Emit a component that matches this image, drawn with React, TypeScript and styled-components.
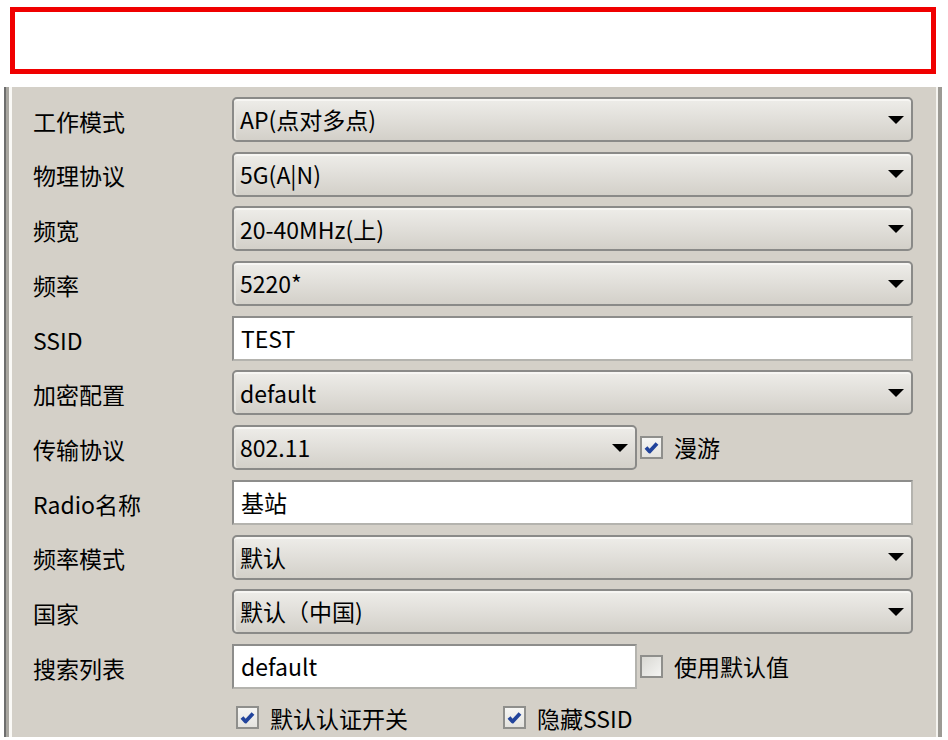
import { createGlobalStyle, styled } from 'styled-components';

const GlobalStyle = createGlobalStyle`
    html, body {
        margin: 0;
        padding: 0;
        background: #ffffff;
    }

    body {
        font-family: 'Noto Sans CJK SC', 'Noto Sans', sans-serif;
        font-size: 23px;
        line-height: 1.15;
        color: #000000;
    }
`;

const Page = styled.div`
    width: 948px;
    height: 740px;
    overflow: hidden;
    padding-top: 7px;
    box-sizing: border-box;
`;

const TitleFrame = styled.div`
    box-sizing: border-box;
    width: 926px;
    height: 67px;
    margin-left: 10px;
    border: 5px solid #f00000;
    background: #ffffff;
`;

const Panel = styled.div`
    box-sizing: border-box;
    width: 938px;
    height: 650px;
    margin: 13px 0 0 4px;
    padding: 10px 0 0 27px;
    overflow: hidden;
    background: #d4d0c8;
    border-left: 2px solid #6e6e6e;
    border-right: 4px solid #9c9a94;
    box-shadow:
        inset 3px 0 0 #a9a7a1,
        inset 6px 0 0 #faf9f6,
        inset -2px 0 0 #f4f3ef;
`;

const Form = styled.div`
    display: grid;
    grid-template-columns: 199px 681px;
    grid-auto-rows: 45px;
    row-gap: 9.7px;
`;

const Label = styled.div`
    display: flex;
    align-items: center;
    padding-top: 3px;
    white-space: nowrap;
`;

const Field = styled.div`
    display: flex;
    align-items: center;
    min-width: 0;
`;

// last row of options sits against the panel's lower edge
const OptionRow = styled.div`
    display: flex;
    align-items: flex-start;
    padding-top: 6px;
`;

const Combo = styled.div<{ $width?: number }>`
    box-sizing: border-box;
    display: flex;
    align-items: center;
    width: ${(p) => (p.$width ? `${p.$width}px` : '100%')};
    height: 100%;
    padding: 0 7px 0 6px;
    border: 2px solid #8a8a88;
    border-radius: 5px;
    background: linear-gradient(180deg, #eeede9 0%, #e2e0db 45%, #d3d0c9 100%);
    box-shadow: inset 0 2px 0 #f7f6f3, inset 2px 0 0 #e8e6e1;
    white-space: nowrap;

    & > span {
        flex: 1;
    }
`;

const DropArrow = () => (
    <svg width="16" height="8" viewBox="0 0 16 8">
        <polygon points="0,0 16,0 8,8" fill="#000000" />
    </svg>
);

const TextInput = styled.div<{ $width?: number }>`
    box-sizing: border-box;
    display: flex;
    align-items: center;
    width: ${(p) => (p.$width ? `${p.$width}px` : '100%')};
    height: 100%;
    padding: 0 7px;
    background: #ffffff;
    border: 2px solid #8d8d8b;
    border-right-color: #b4b3ae;
    border-bottom-color: #b4b3ae;
    white-space: nowrap;
`;

const Box = styled.span<{ $checked: boolean }>`
    box-sizing: border-box;
    display: inline-flex;
    align-items: center;
    justify-content: center;
    flex: none;
    width: 23px;
    height: 23px;
    border: 2px solid #8f8f8c;
    background: ${(p) =>
        p.$checked
            ? 'linear-gradient(180deg, #f6f6f4 0%, #e4e3df 100%)'
            : 'linear-gradient(135deg, #d9d8d3 0%, #f4f4f2 100%)'};
`;

const Option = styled.div<{ $width?: number; $lead?: number }>`
    display: flex;
    align-items: center;
    gap: 11px;
    flex: none;
    width: ${(p) => (p.$width ? `${p.$width}px` : 'auto')};
    margin-left: ${(p) => p.$lead ?? 0}px;
    white-space: nowrap;
`;

const Check = ({ checked, label, width, lead }: { checked: boolean; label: string; width?: number; lead?: number }) => (
    <Option $width={width} $lead={lead}>
        <Box $checked={checked}>
            {checked && (
                <svg width="15" height="13" viewBox="0 0 15 13">
                    <path d="M2 6.5 L5.6 10.5 L13 2.5" fill="none" stroke="#22449c" strokeWidth="3.8" strokeLinejoin="round" />
                </svg>
            )}
        </Box>
        <span>{label}</span>
    </Option>
);

type Row = { label: string; kind: 'combo' | 'input'; value: string };

const rows: Row[] = [
    { label: '工作模式', kind: 'combo', value: 'AP(点对多点)' },
    { label: '物理协议', kind: 'combo', value: '5G(A|N)' },
    { label: '频宽', kind: 'combo', value: '20-40MHz(上)' },
    { label: '频率', kind: 'combo', value: '5220*' },
    { label: 'SSID', kind: 'input', value: 'TEST' },
    { label: '加密配置', kind: 'combo', value: 'default' },
];

const rowsAfter: Row[] = [
    { label: 'Radio名称', kind: 'input', value: '基站' },
    { label: '频率模式', kind: 'combo', value: '默认' },
    { label: '国家', kind: 'combo', value: '默认（中国)' },
];

const renderRow = (r: Row) => [
    <Label key={`l-${r.label}`}>{r.label}</Label>,
    <Field key={`f-${r.label}`}>
        {r.kind === 'combo' ? (
            <Combo>
                <span>{r.value}</span>
                <DropArrow />
            </Combo>
        ) : (
            <TextInput>{r.value}</TextInput>
        )}
    </Field>,
];

export default function App() {
    return (
        <Page>
            <GlobalStyle />
            <TitleFrame />
            <Panel>
                <Form>
                    {rows.map(renderRow)}

                    <Label>传输协议</Label>
                    <Field>
                        <Combo $width={405}>
                            <span>802.11</span>
                            <DropArrow />
                        </Combo>
                        <Check checked label="漫游" lead={3} />
                    </Field>

                    {rowsAfter.map(renderRow)}

                    <Label>搜索列表</Label>
                    <Field>
                        <TextInput $width={405}>default</TextInput>
                        <Check checked={false} label="使用默认值" lead={3} />
                    </Field>

                    <Label />
                    <OptionRow>
                        <Check checked label="默认认证开关" lead={4} width={267} />
                        <Check checked label="隐藏SSID" />
                    </OptionRow>
                </Form>
            </Panel>
        </Page>
    );
}
